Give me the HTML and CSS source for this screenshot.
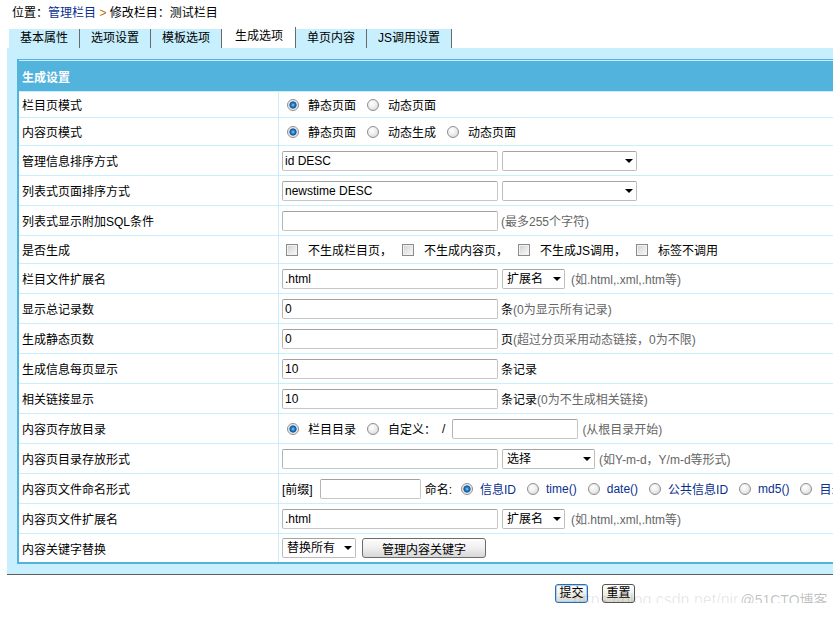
FILE: index.html
```html
<!DOCTYPE html>
<html lang="zh-CN">
<head>
<meta charset="utf-8">
<title>修改栏目 - 生成选项</title>
<link rel="stylesheet" href="styles.css">
</head>
<body>
<div class="page">
  <div class="crumb">位置：<a href="#">管理栏目</a> <span class="gt">&gt;</span> 修改栏目：测试栏目</div>
  <ul class="tabs">
    <li>基本属性</li>
    <li>选项设置</li>
    <li>模板选项</li>
    <li class="on">生成选项</li>
    <li>单页内容</li>
    <li>JS调用设置</li>
  </ul>
  <div class="panel">
    <table class="form">
      <tr class="head"><td colspan="2">生成设置</td></tr>
      <tr class="h26">
        <td class="l">栏目页模式</td>
        <td><div class="f">
          <label class="opt"><input type="radio" name="listdt" class="rd" checked>静态页面</label>
          <label class="opt"><input type="radio" name="listdt" class="rd">动态页面</label>
        </div></td>
      </tr>
      <tr class="h28">
        <td class="l">内容页模式</td>
        <td><div class="f">
          <label class="opt"><input type="radio" name="showdt" class="rd" checked>静态页面</label>
          <label class="opt"><input type="radio" name="showdt" class="rd">动态生成</label>
          <label class="opt"><input type="radio" name="showdt" class="rd">动态页面</label>
        </div></td>
      </tr>
      <tr>
        <td class="l">管理信息排序方式</td>
        <td><div class="f">
          <input type="text" class="txt" value="id DESC">
          <span class="sel w135 ml4"><select><option></option></select></span>
        </div></td>
      </tr>
      <tr>
        <td class="l">列表式页面排序方式</td>
        <td><div class="f">
          <input type="text" class="txt" value="newstime DESC">
          <span class="sel w135 ml4"><select><option></option></select></span>
        </div></td>
      </tr>
      <tr>
        <td class="l">列表式显示附加SQL条件</td>
        <td><div class="f">
          <input type="text" class="txt" value="">
          <span class="hint ml3">(最多255个字符)</span>
        </div></td>
      </tr>
      <tr class="h28">
        <td class="l">是否生成</td>
        <td><div class="f">
          <label class="chk"><input type="checkbox" class="cb">不生成栏目页，</label>
          <label class="chk"><input type="checkbox" class="cb">不生成内容页，</label>
          <label class="chk"><input type="checkbox" class="cb">不生成JS调用，</label>
          <label class="chk"><input type="checkbox" class="cb">标签不调用</label>
        </div></td>
      </tr>
      <tr>
        <td class="l">栏目文件扩展名</td>
        <td><div class="f">
          <input type="text" class="txt" value=".html">
          <span class="sel w63 ml4"><select><option>扩展名</option></select></span>
          <span class="hint ml6">(如.html,.xml,.htm等)</span>
        </div></td>
      </tr>
      <tr>
        <td class="l">显示总记录数</td>
        <td><div class="f">
          <input type="text" class="txt" value="0">
          <span class="ml3">条<span class="hint">(0为显示所有记录)</span></span>
        </div></td>
      </tr>
      <tr>
        <td class="l">生成静态页数</td>
        <td><div class="f">
          <input type="text" class="txt" value="0">
          <span class="ml3">页<span class="hint">(超过分页采用动态链接，0为不限)</span></span>
        </div></td>
      </tr>
      <tr>
        <td class="l">生成信息每页显示</td>
        <td><div class="f">
          <input type="text" class="txt" value="10">
          <span class="ml3">条记录</span>
        </div></td>
      </tr>
      <tr>
        <td class="l">相关链接显示</td>
        <td><div class="f">
          <input type="text" class="txt" value="10">
          <span class="ml3">条记录<span class="hint">(0为不生成相关链接)</span></span>
        </div></td>
      </tr>
      <tr>
        <td class="l">内容页存放目录</td>
        <td><div class="f">
          <label class="opt"><input type="radio" name="infopath" class="rd" checked>栏目目录</label>
          <label class="opt"><input type="radio" name="infopath" class="rd">自定义：</label>
          <span class="slash">/</span>
          <input type="text" class="txt w126" value="">
          <span class="hint ml4">(从根目录开始)</span>
        </div></td>
      </tr>
      <tr>
        <td class="l">内容页目录存放形式</td>
        <td><div class="f">
          <input type="text" class="txt" value="">
          <span class="sel w93 ml4"><select><option>选择</option></select></span>
          <span class="hint ml4">(如Y-m-d，Y/m-d等形式)</span>
        </div></td>
      </tr>
      <tr>
        <td class="l">内容页文件命名形式</td>
        <td><div class="f">
          <span>[前缀]</span>
          <input type="text" class="txt w101 ml7" value="">
          <span class="ml4">命名:</span>
          <label class="nm first"><input type="radio" name="filename" class="rd" checked>信息ID</label>
          <label class="nm"><input type="radio" name="filename" class="rd">time()</label>
          <label class="nm"><input type="radio" name="filename" class="rd">date()</label>
          <label class="nm"><input type="radio" name="filename" class="rd">公共信息ID</label>
          <label class="nm"><input type="radio" name="filename" class="rd">md5()</label>
          <label class="nm"><input type="radio" name="filename" class="rd">目录</label>
        </div></td>
      </tr>
      <tr>
        <td class="l">内容页文件扩展名</td>
        <td><div class="f">
          <input type="text" class="txt" value=".html">
          <span class="sel w63 ml4"><select><option>扩展名</option></select></span>
          <span class="hint ml6">(如.html,.xml,.htm等)</span>
        </div></td>
      </tr>
      <tr class="last">
        <td class="l">内容关键字替换</td>
        <td><div class="f">
          <span class="sel w74"><select><option>替换所有</option></select></span>
          <button type="button" class="kbtn">管理内容关键字</button>
        </div></td>
      </tr>
    </table>
  </div>
  <div class="actions">
    <button type="submit" class="btn def">提交</button>
    <button type="reset" class="btn">重置</button>
  </div>
  <div class="wm"><span class="wm-url">https://blog.csdn.net/nir</span><span class="wm-site">@51CTO博客</span></div>
</div>
</body>
</html>
```
FILE: styles.css
```css
html, body {
  margin: 0;
  padding: 0;
  overflow: hidden;
  background: #fff;
}

body {
  font: 12px "Liberation Sans", "Noto Sans CJK SC", sans-serif;
  color: #000;
}

.page {
  width: 1190px;
  position: relative;
}

/* breadcrumb */
.crumb {
  padding: 5px 0 0 12px;
  height: 16px;
  line-height: 16px;
}
.crumb a {
  color: #0a2f8f;
  text-decoration: none;
}
.crumb .gt {
  color: #b87400;
}

/* tabs */
.tabs {
  list-style: none;
  margin: 6px 0 0 9px;
  padding: 0;
  display: flex;
  align-items: flex-end;
  height: 21px;
}
.tabs li {
  background: #c7effd;
  height: 19px;
  line-height: 19px;
  padding: 0 11px;
  border-right: 1px solid #6a6a6a;
}
.tabs li.on {
  background: #fff;
  height: 21px;
  line-height: 18px;
  padding: 0 12px 0 13px;
}

/* panel */
.panel {
  margin-left: 7px;
  background: #c7effd;
  padding: 11px 10px 10px 10px;
  border-bottom: 1px solid #5e5e5e;
}

.form {
  width: 100%;
  border-collapse: separate;
  border-spacing: 0;
  border: 2px solid #52b3dd;
  border-top-width: 1px;
  background: #fff;
}
.form td {
  box-sizing: border-box;
  height: 30px;
  padding: 0 0 0 3px;
  border-bottom: 1px solid #c7effd;
  vertical-align: middle;
  white-space: nowrap;
}
.form td.l {
  width: 260px;
  border-right: 1px solid #c7effd;
}
.form tr.head td {
  height: 32px;
  background: #52b3dd;
  color: #fff;
  font-weight: bold;
  border-top: 1px solid #c7effd;
}
.form tr.h26 td { height: 26px; }
.form tr.h28 td { height: 28px; }
.form tr.last td {
  height: 28px;
  border-bottom: none;
}

.f {
  display: flex;
  align-items: center;
  white-space: nowrap;
}

/* radios & checkboxes */
.rd {
  -webkit-appearance: none;
  appearance: none;
  box-sizing: border-box;
  width: 12px;
  height: 12px;
  margin: 0;
  border-radius: 50%;
  border: 1px solid #8e8e8e;
  background: radial-gradient(circle at 40% 35%, #ffffff 0, #eeeeee 45%, #cdcdcd 100%);
  flex: none;
}
.rd:checked {
  background: radial-gradient(circle at 50% 50%, #8fd6ff 0, #2b8fdb 1.4px, #0d4f92 3.2px, #d9d9d9 3.9px, #f5f5f5 5px);
}

.opt {
  display: inline-flex;
  align-items: center;
  margin-right: 6px;
}
.opt .rd {
  margin: 0 9px 0 5px;
}

.chk {
  display: inline-flex;
  align-items: center;
  margin-right: 6px;
}
.cb {
  -webkit-appearance: none;
  appearance: none;
  box-sizing: border-box;
  width: 12px;
  height: 12px;
  margin: 0 10px 0 4px;
  border: 1px solid #8a8a8a;
  background: linear-gradient(135deg, #cfcfcf 0, #e6e6e6 50%, #fafafa 100%);
  box-shadow: inset 0 0 0 1px #f2f2f2;
  flex: none;
}

.nm {
  display: inline-flex;
  align-items: center;
  color: #0a2f8f;
  margin-right: 6px;
}
.nm .rd {
  margin: 0 7px 0 5px;
}
.nm.first .rd {
  margin-left: 9px;
}

/* text inputs */
.txt {
  box-sizing: border-box;
  width: 216px;
  height: 20px;
  margin: 0;
  padding: 0 2px;
  border: 1px solid #c6c6c6;
  border-top-color: #a2a2a2;
  border-left-color: #b4b4b4;
  border-radius: 2px;
  font: inherit;
  color: #000;
  background: #fff;
  flex: none;
}
.txt.w126 { width: 126px; }
.txt.w101 { width: 101px; }

/* selects */
.sel {
  position: relative;
  display: inline-block;
  height: 20px;
  flex: none;
}
.sel select {
  -webkit-appearance: none;
  appearance: none;
  box-sizing: border-box;
  width: 100%;
  height: 20px;
  margin: 0;
  padding: 0 14px 0 4px;
  border: 1px solid #bdbdbd;
  border-top-color: #a4a4a4;
  border-radius: 2px;
  background: #fff;
  font: inherit;
  color: #000;
}
.sel::after {
  content: "";
  position: absolute;
  right: 4px;
  top: 8px;
  border-left: 4px solid transparent;
  border-right: 4px solid transparent;
  border-top: 4px solid #000;
  pointer-events: none;
}
.w135 { width: 135px; }
.w63 { width: 63px; }
.w93 { width: 93px; }
.w74 { width: 74px; }

.hint { color: #666; }
.slash { margin: 0 7px 0 0; }

.ml3 { margin-left: 3px; }
.ml4 { margin-left: 4px; }
.ml6 { margin-left: 6px; }
.ml7 { margin-left: 7px; }

.kbtn {
  box-sizing: border-box;
  width: 124px;
  height: 20px;
  margin: 0 0 0 6px;
  padding: 0;
  border: 1px solid #6c6c6c;
  border-radius: 3px;
  background: linear-gradient(#fdfdfd 0, #efefef 50%, #d7d7d7 100%);
  font: inherit;
  color: #000;
}

/* actions */
.actions {
  display: flex;
  justify-content: center;
  gap: 14px;
  padding-top: 9px;
}
.btn {
  box-sizing: border-box;
  height: 19px;
  width: 33px;
  margin: 0;
  padding: 0;
  border: 1px solid #555;
  border-radius: 3px;
  background: linear-gradient(#ffffff 0, #efeee9 55%, #d8d5cb 100%);
  font: inherit;
  color: #000;
  line-height: 15px;
}
.btn.def {
  border-color: #2c6db3;
  box-shadow: inset 0 0 0 1px #a9d3f5;
}

/* watermark overlay */
.wm {
  position: absolute;
  left: 573px;
  top: 589px;
  white-space: nowrap;
  pointer-events: none;
  display: flex;
  align-items: baseline;
}
.wm-url {
  font: 16px "Liberation Sans", sans-serif;
  color: rgba(0, 0, 0, 0.1);
}
.wm-site {
  margin-left: 2px;
  font: 14px "Liberation Sans", "Noto Sans CJK SC", sans-serif;
  color: rgba(0, 0, 0, 0.25);
}
```
